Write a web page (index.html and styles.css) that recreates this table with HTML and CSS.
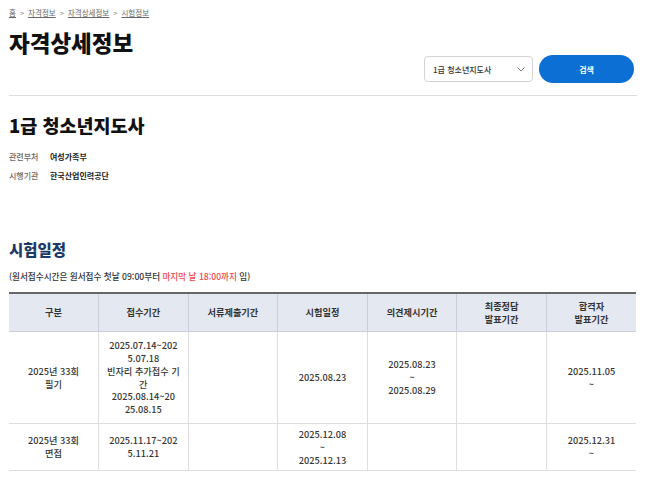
FILE: index.html
```html
<!DOCTYPE html>
<html lang="ko">
<head>
<meta charset="utf-8">
<title>자격상세정보</title>
<link rel="stylesheet" href="styles.css">
</head>
<body>
	<div class="wrap">
		<!-- breadcrumb -->
		<div class="crumb">
			<a href="#">홈</a><span class="sep">&gt;</span><a href="#">자격정보</a><span class="sep">&gt;</span><a href="#">자격상세정보</a><span class="sep">&gt;</span><a href="#">시험정보</a>
		</div>

		<div class="head">
			<h1 class="pageTitle">자격상세정보</h1>
			<div class="search">
				<div class="selectBox">
					<span>1급 청소년지도사</span>
					<svg width="8" height="5" viewBox="0 0 8 5"><path d="M0.5 0.5l3.5 3.5L7.5 0.5" fill="none" stroke="#777" stroke-width="1"/></svg>
				</div>
				<button class="btnSearch" type="button">검색</button>
			</div>
		</div>

		<h2 class="qualName">1급 청소년지도사</h2>
		<dl class="info">
			<div class="infoRow"><dt>관련부처</dt><dd>여성가족부</dd></div>
			<div class="infoRow"><dt>시행기관</dt><dd>한국산업인력공단</dd></div>
		</dl>

		<h3 class="secTitle">시험일정</h3>
		<p class="note">(원서접수시간은 원서접수 첫날 09:00부터 <span class="red">마지막 날 18:00까지</span> 임)</p>

		<table class="schedule">
			<thead>
				<tr>
					<th>구분</th>
					<th>접수기간</th>
					<th>서류제출기간</th>
					<th>시험일정</th>
					<th>의견제시기간</th>
					<th>최종정답<br>발표기간</th>
					<th>합격자<br>발표기간</th>
				</tr>
			</thead>
			<tbody>
				<tr class="rowTall">
					<td>2025년 33회<br>필기</td>
					<td>2025.07.14~202<br>5.07.18<br>빈자리 추가접수 기<br>간<br>2025.08.14~20<br>25.08.15</td>
					<td></td>
					<td>2025.08.23</td>
					<td>2025.08.23<br>~<br>2025.08.29</td>
					<td></td>
					<td>2025.11.05<br>~</td>
				</tr>
				<tr class="rowShort">
					<td>2025년 33회<br>면접</td>
					<td>2025.11.17~202<br>5.11.21</td>
					<td></td>
					<td>2025.12.08<br>~<br>2025.12.13</td>
					<td></td>
					<td></td>
					<td>2025.12.31<br>~</td>
				</tr>
			</tbody>
		</table>
	</div>
</body>
</html>
```

FILE: styles.css
```css
body {
	margin: 0;
	font-family: "Noto Sans CJK KR", "Noto Sans", sans-serif;
	color: #222;
	background: #fff;
}

.wrap {
	width: 628px;
	padding: 7px 0 0 9px;
}

.crumb {
	font-size: 7.5px;
	line-height: 12px;
	color: #666;
}

.crumb a {
	color: #666;
	text-decoration: underline;
}

.crumb .sep {
	margin: 0 4px;
	color: #888;
}

.head {
	display: flex;
	justify-content: space-between;
	align-items: flex-start;
	border-bottom: 1px solid #ddd;
	padding-bottom: 12px;
}

.pageTitle {
	margin: 8px 0 0;
	font-size: 22.5px;
	line-height: 30px;
	font-weight: 900;
	color: #111;
}

.search {
	display: flex;
	align-items: center;
	gap: 6px;
	margin: 36px 3px 0 0;
}

.selectBox {
	width: 109px;
	height: 26px;
	box-sizing: border-box;
	border: 1px solid #d3d3d3;
	border-radius: 4px;
	padding: 0 7px 0 8px;
	display: flex;
	align-items: center;
	justify-content: space-between;
	font-size: 8px;
	font-weight: 500;
	color: #333;
}

.btnSearch {
	width: 95px;
	height: 28px;
	border: none;
	border-radius: 14px;
	background: #0b6fd3;
	color: #fff;
	font-family: inherit;
	font-size: 8px;
	font-weight: 700;
}

.qualName {
	margin: 16px 0 0;
	font-size: 18.5px;
	line-height: 26px;
	font-weight: 900;
	color: #111;
}

.info {
	margin: 9px 0 0;
}

.infoRow {
	display: flex;
	font-size: 8px;
	line-height: 19px;
}

.infoRow dt {
	width: 41px;
	color: #666;
	font-weight: 500;
}

.infoRow dd {
	margin: 0;
	color: #222;
	font-weight: 700;
}

.secTitle {
	margin: 52px 0 0;
	font-size: 15.5px;
	line-height: 24px;
	font-weight: 900;
	color: #1c3a68;
}

.note {
	margin: 8px 0 0;
	font-size: 8.6px;
	line-height: 14px;
	font-weight: 500;
	color: #333;
}

.note .red {
	color: #f0464b;
}

.schedule {
	margin-top: 9px;
	width: 627px;
	table-layout: fixed;
	border-collapse: collapse;
	border-top: 2px solid #666;
	font-size: 9.2px;
	line-height: 12.8px;
	text-align: center;
}

.schedule th {
	background: #e4e8f0;
	font-weight: 700;
	color: #333;
	height: 37px;
	padding: 0 4px;
	border-left: 1px solid #ccd;
	border-bottom: 1px solid #ccd;
}

.schedule td {
	padding: 4px 6px;
	color: #333;
	border-left: 1px solid #ddd;
	border-bottom: 1px solid #ddd;
	font-weight: 500;
}

.rowTall td {
	height: 83px;
}

.rowShort td {
	height: 38px;
}

.schedule th:first-child,
.schedule td:first-child {
	border-left: none;
}
```
